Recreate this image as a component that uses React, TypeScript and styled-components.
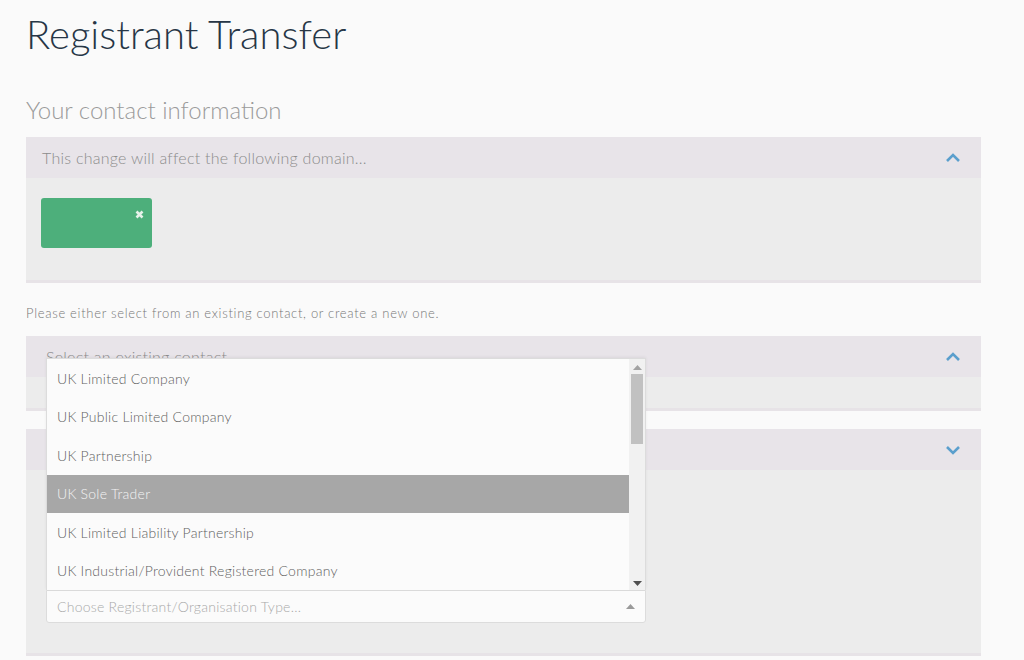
import React from "react";
import styled, { createGlobalStyle } from "styled-components";

const GlobalStyle = createGlobalStyle`
  html, body {
    margin: 0;
    padding: 0;
    background: #fafafa;
    font-family: Lato, "Open Sans", Arial, sans-serif;
  }
  * { box-sizing: border-box; }
`;

const Page = styled.div`
  padding: 8px 43px 0 26px;
  width: 1024px;
`;

const Title = styled.h1`
  margin: 0;
  font-family: Lato, sans-serif;
  font-weight: 300;
  font-size: 40px;
  line-height: 52px;
  color: #273646;
`;

const SubTitle = styled.h2`
  margin: 35px 0 12px;
  font-family: Lato, sans-serif;
  font-weight: 300;
  font-size: 24px;
  line-height: 30px;
  color: #9b9b9b;
`;

const Panel = styled.section<{ $gap?: number }>`
  background: #ececec;
  border-bottom: 3px solid #e7e3e7;
  margin-bottom: ${(p) => p.$gap ?? 0}px;
`;

const PanelHeader = styled.div<{ $indent?: number }>`
  height: 41px;
  background: #e8e4e9;
  display: flex;
  align-items: center;
  justify-content: space-between;
  padding: 0 20px 0 ${(p) => p.$indent ?? 16}px;
  font-family: Lato, sans-serif;
  font-weight: 300;
  font-size: 16px;
  letter-spacing: 0.25px;
  color: #8c8c8c;
`;

const PanelBody = styled.div<{ $pad: string }>`
  padding: ${(p) => p.$pad};
`;

const DomainTag = styled.div`
  width: 111px;
  height: 50px;
  background: #4daf7b;
  border-radius: 3px;
  display: flex;
  justify-content: flex-end;
  align-items: flex-start;
  padding: 12px 8px 0 0;
`;

const Note = styled.p`
  margin: 21px 0 14px;
  font-family: Lato, sans-serif;
  font-weight: 300;
  font-size: 13px;
  letter-spacing: 0.7px;
  line-height: 18px;
  color: #777;
`;

const SelectWrap = styled.div`
  position: relative;
  width: 600px;
`;

const DropList = styled.div`
  position: absolute;
  left: 0;
  right: 0;
  bottom: 100%;
  display: flex;
  background: #fbfbfb;
  border: 1px solid #dcdcdc;
  border-bottom: none;
  box-shadow: 0 -1px 3px rgba(0, 0, 0, 0.06);
`;

const Options = styled.ul`
  list-style: none;
  margin: 0;
  padding: 0;
  flex: 1;
`;

const Option = styled.li<{ $active?: boolean }>`
  height: 38.5px;
  display: flex;
  align-items: center;
  padding-left: 10px;
  font-family: Lato, sans-serif;
  font-weight: 300;
  font-size: 14px;
  letter-spacing: 0.25px;
  color: ${(p) => (p.$active ? "#f4f4f4" : "#5f5f5f")};
  background: ${(p) => (p.$active ? "#a7a7a7" : "transparent")};
`;

const ScrollTrack = styled.div`
  width: 16px;
  background: #f1f1f1;
  display: flex;
  flex-direction: column;
  align-items: center;
  padding: 6px 0 4px;
`;

const Thumb = styled.div`
  width: 12px;
  height: 70px;
  margin-top: 4px;
  background: #c1c1c1;
  flex: none;
`;

const Spacer = styled.div`
  flex: 1;
`;

const Input = styled.div`
  height: 33px;
  background: #fbfbfb;
  border: 1px solid #dcdcdc;
  border-radius: 0 0 3px 3px;
  display: flex;
  align-items: center;
  justify-content: space-between;
  padding: 0 10px 0 10px;
  font-family: Lato, sans-serif;
  font-weight: 300;
  font-size: 14px;
  letter-spacing: 0.25px;
  color: #a9a9a9;
`;

const Chevron = ({ down }: { down?: boolean }) => (
  <svg width="16" height="10" viewBox="0 0 16 10">
    <path
      d={down ? "M2 2 L8 8 L14 2" : "M2 8 L8 2 L14 8"}
      fill="none"
      stroke="#5b9fcd"
      strokeWidth="2.6"
    />
  </svg>
);

const Close = () => (
  <svg width="9" height="9" viewBox="0 0 9 9">
    <path d="M1.5 1.5 L7.5 7.5 M7.5 1.5 L1.5 7.5" stroke="#e6f2ea" strokeWidth="2.6" />
  </svg>
);

const Tri = ({ up, color }: { up?: boolean; color: string }) => (
  <svg width="9" height="5" viewBox="0 0 9 5">
    <path d={up ? "M0 5 L4.5 0 L9 5 Z" : "M0 0 L9 0 L4.5 5 Z"} fill={color} />
  </svg>
);

const options = [
  "UK Limited Company",
  "UK Public Limited Company",
  "UK Partnership",
  "UK Sole Trader",
  "UK Limited Liability Partnership",
  "UK Industrial/Provident Registered Company",
];

export default function App() {
  return (
    <>
      <GlobalStyle />
      <Page>
        <Title>Registrant Transfer</Title>
        <SubTitle>Your contact information</SubTitle>
        <Panel>
          <PanelHeader>
            <span>This change will affect the following domain...</span>
            <Chevron />
          </PanelHeader>
          <PanelBody $pad="20px 15px 32px">
            <DomainTag>
              <Close />
            </DomainTag>
          </PanelBody>
        </Panel>
        <Note>Please either select from an existing contact, or create a new one.</Note>
        <Panel $gap={18}>
          <PanelHeader $indent={20}>
            <span>Select an existing contact</span>
            <Chevron />
          </PanelHeader>
          <PanelBody $pad="31px 20px 0" />
        </Panel>
        <Panel>
          <PanelHeader $indent={20}>
            <span />
            <Chevron down />
          </PanelHeader>
          <PanelBody $pad="120px 20px 30px">
            <SelectWrap>
              <DropList>
                <Options>
                  {options.map((o) => (
                    <Option key={o} $active={o === "UK Sole Trader"}>
                      {o}
                    </Option>
                  ))}
                </Options>
                <ScrollTrack>
                  <Tri up color="#a3a3a3" />
                  <Thumb />
                  <Spacer />
                  <Tri color="#505050" />
                </ScrollTrack>
              </DropList>
              <Input>
                <span>Choose Registrant/Organisation Type...</span>
                <Tri up color="#9a9a9a" />
              </Input>
            </SelectWrap>
          </PanelBody>
        </Panel>
      </Page>
    </>
  );
}
